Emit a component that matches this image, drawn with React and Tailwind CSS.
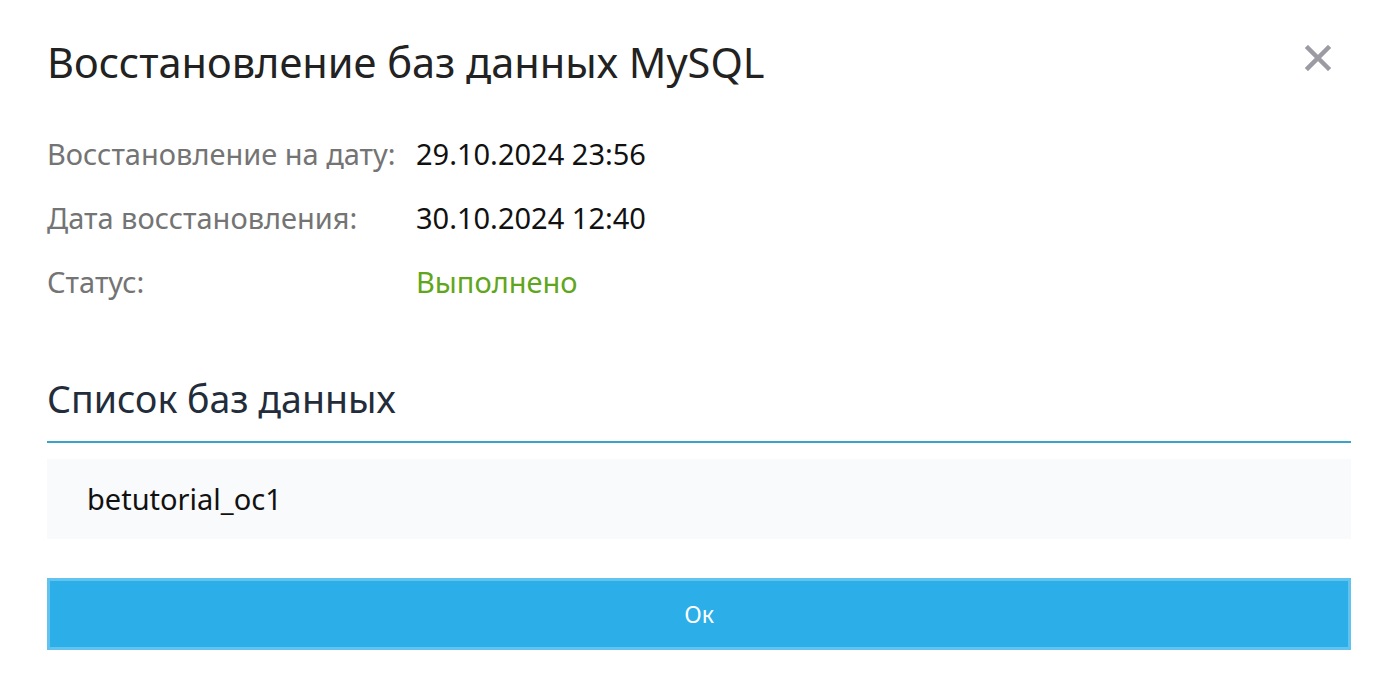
import React from "react";

export default function App() {
  return (
    <div className="w-[1394px] h-[676px] bg-white pl-[47px] pr-[43px] pt-[37px] text-[#1a1a1a]" style={{ fontFamily: '"Noto Sans", sans-serif' }}>
      <div className="flex items-start justify-between">
        <h1 className="text-[41.5px] leading-[50px] font-normal text-[#222222]">Восстановление баз данных MySQL</h1>
        <button className="mt-[8px] mr-[20px] w-[26px] h-[26px] flex items-center justify-center">
          <svg width="26" height="26" viewBox="0 0 26 26">
            <path d="M3 3 L23 23 M23 3 L3 23" stroke="#9b9ca3" strokeWidth="4.5" strokeLinecap="square" />
          </svg>
        </button>
      </div>

      <div className="mt-[46px] flex flex-col gap-[22px] text-[29px] leading-[42px]">
        <div className="flex">
          <div className="w-[369px] text-[#747474]">Восстановление на дату:</div>
          <div className="text-[#111111]">29.10.2024 23:56</div>
        </div>
        <div className="flex">
          <div className="w-[369px] text-[#747474]">Дата восстановления:</div>
          <div className="text-[#111111]">30.10.2024 12:40</div>
        </div>
        <div className="flex">
          <div className="w-[369px] text-[#747474]">Статус:</div>
          <div className="text-[#5fa61c]">Выполнено</div>
        </div>
      </div>

      <h2 className="mt-[73px] text-[37.5px] leading-[46px] text-[#232c3a] font-normal">Список баз данных</h2>
      <div className="mt-[19px] h-[2px] bg-[#3aa3c9]"></div>
      <div className="mt-[16px] h-[80px] bg-[#f9fafb] flex items-center px-[40px] text-[29px] text-[#111111]">betutorial_oc1</div>

      <button className="mt-[39px] w-full h-[72px] bg-[#2cafe8] border-[3px] border-[#62c4ee] text-white text-[23px] flex items-center justify-center">Ок</button>
    </div>
  );
}
